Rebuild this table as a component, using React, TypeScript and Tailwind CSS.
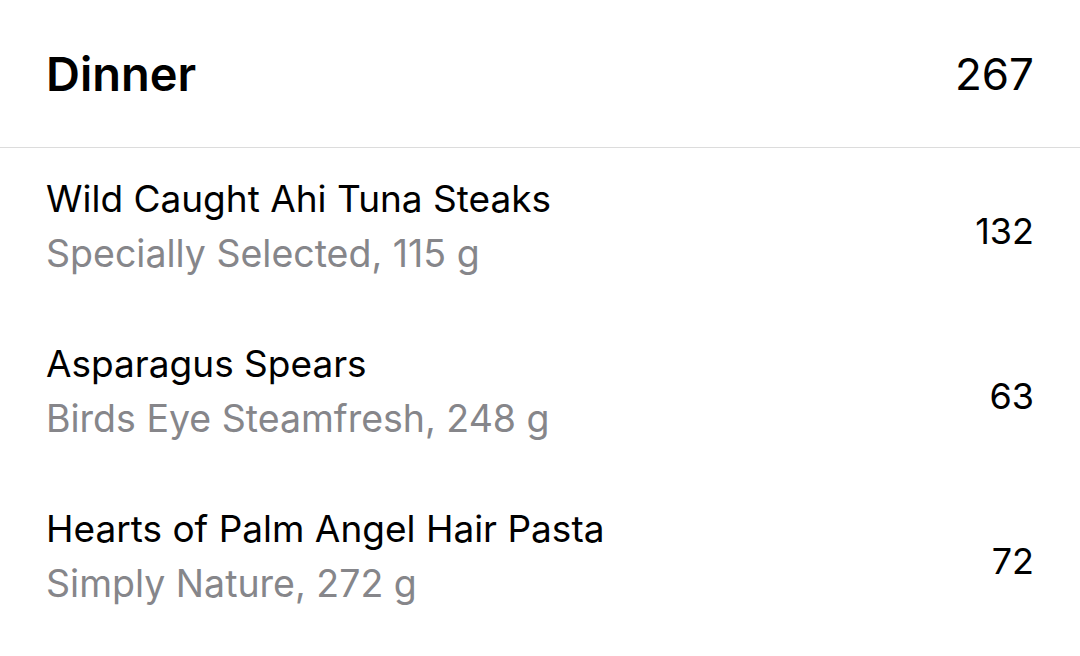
import React from "react";

const items = [
  { name: "Wild Caught Ahi Tuna Steaks", detail: "Specially Selected, 115 g", cal: 132 },
  { name: "Asparagus Spears", detail: "Birds Eye Steamfresh, 248 g", cal: 63 },
  { name: "Hearts of Palm Angel Hair Pasta", detail: "Simply Nature, 272 g", cal: 72 },
];

export default function App() {
  return (
    <div
      className="w-[1080px] h-[656px] bg-white overflow-hidden text-black"
      style={{ fontFamily: "Inter, 'Liberation Sans', sans-serif" }}
    >
      <div className="h-[147px] flex items-center justify-between pl-[46px] pr-[46px]">
        <div className="text-[47px] font-semibold leading-none">Dinner</div>
        <div className="text-[44px] font-normal leading-none">267</div>
      </div>
      <div className="h-px bg-[#dcdcdc]" />
      {items.map((it) => (
        <div key={it.name} className="h-[165px] flex items-center justify-between pl-[46px] pr-[46px]">
          <div className="flex flex-col gap-[7px] mb-[8px]">
            <div className="text-[37px] leading-[48px] text-black">{it.name}</div>
            <div className="text-[37.5px] leading-[48px] text-[#86868a]">{it.detail}</div>
          </div>
          <div className="text-[36px] leading-none">{it.cal}</div>
        </div>
      ))}
    </div>
  );
}
